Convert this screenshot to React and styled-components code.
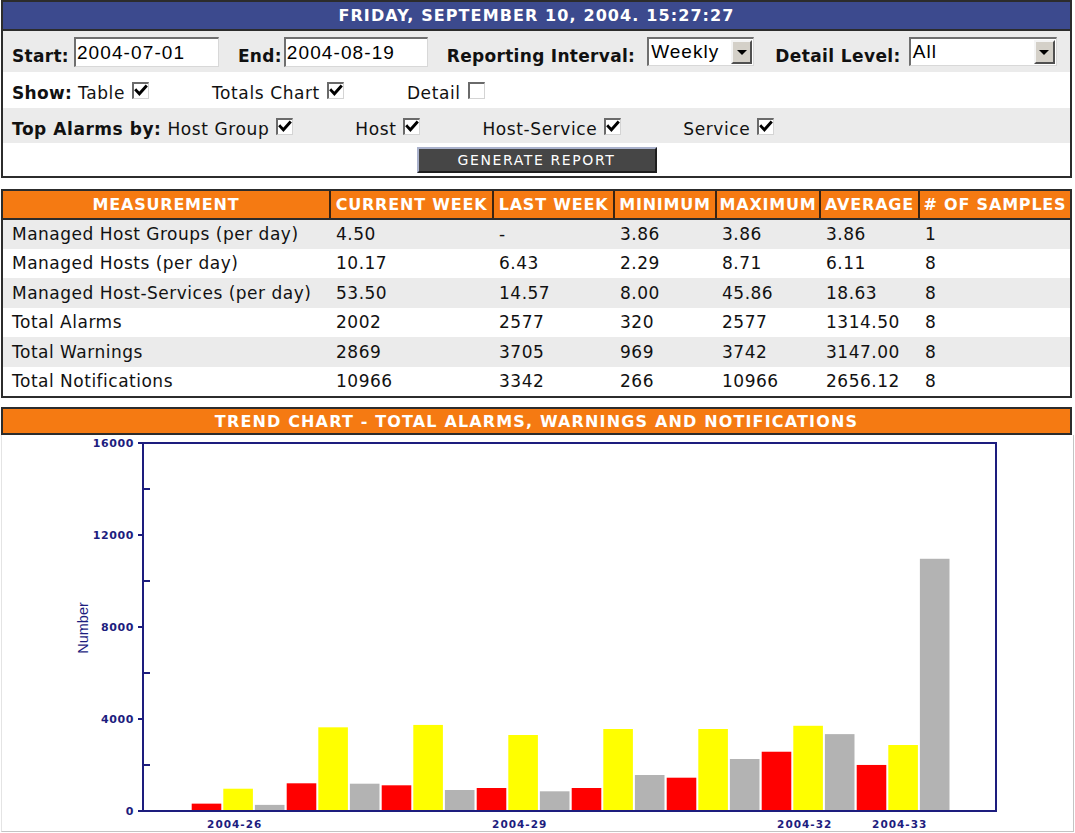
import React from 'react';
import styled, { createGlobalStyle } from 'styled-components';

const GlobalStyle = createGlobalStyle`
  html, body { margin: 0; padding: 0; background: #ffffff; }
  body { font-family: "DejaVu Sans", Verdana, sans-serif; color: #111; }
  * { box-sizing: border-box; }
`;

const NAVY = '#1d1d7e';
const ORANGE = '#f57a12';
const DARK = '#2c2c2c';

const Page = styled.div`
  width: 1075px;
  height: 833px;
  overflow: hidden;
  padding-left: 1px;
  display: flex;
  flex-direction: column;
`;

const Panel = styled.section`
  width: 1071px;
  border: 2px solid ${DARK};
  background: #fff;
  margin-top: ${p => p.$mt || 0}px;
`;

const DateBar = styled.div`
  height: 29px;
  background: #3c4a8e;
  color: #fff;
  font-weight: bold;
  font-size: 16px;
  letter-spacing: 1.1px;
  display: flex;
  align-items: center;
  justify-content: center;
  border-bottom: 2px solid ${DARK};
`;

const FormRow = styled.div`
  height: ${p => p.$h}px;
  background: ${p => (p.$shade ? '#ebebeb' : '#ffffff')};
  display: flex;
  align-items: ${p => (p.$center ? 'center' : 'flex-end')};
  justify-content: ${p => (p.$center ? 'center' : 'flex-start')};
  padding-left: ${p => (p.$center ? 0 : 9)}px;
  padding-bottom: ${p => p.$pb || 0}px;
  gap: ${p => p.$gap || 0}px;
  font-size: 17px;
`;

const Field = styled.div`
  display: flex;
  align-items: flex-end;
  gap: ${p => p.$gap}px;
  margin-left: ${p => p.$ml || 0}px;
`;

const Label = styled.span`
  font-weight: bold;
  font-size: 17px;
  line-height: 20px;
  letter-spacing: ${p => (p.$ls !== undefined ? p.$ls : 0.55)}px;
  white-space: nowrap;
  padding-bottom: ${p => p.$pb || 0}px;
`;

const Text = styled.span`
  font-size: 17px;
  line-height: 20px;
  letter-spacing: 0.6px;
  white-space: nowrap;
`;

const TextInput = styled.input`
  width: ${p => p.$w}px;
  height: 30px;
  border-top: 2px solid #6f6f6f;
  border-left: 2px solid #6f6f6f;
  border-right: 1px solid #d8d8d8;
  border-bottom: 1px solid #d8d8d8;
  background: #fff;
  font-family: "Liberation Sans", Arial, sans-serif;
  font-size: 19px;
  letter-spacing: 1.1px;
  padding: 0 0 0 1px;
  color: #000;
  outline: none;
`;

const SelectBox = styled.div`
  width: ${p => p.$w}px;
  height: 29px;
  margin-bottom: 1px;
  border-top: 2px solid #6f6f6f;
  border-left: 2px solid #6f6f6f;
  border-right: 1px solid #d8d8d8;
  border-bottom: 1px solid #d8d8d8;
  background: #fff;
  display: flex;
  align-items: center;
  justify-content: space-between;
  padding: 0 1px 0 2px;
  font-family: "Liberation Sans", Arial, sans-serif;
  font-size: 19px;
  letter-spacing: 1px;
  color: #000;
`;

const ArrowButton = styled.span`
  width: 21px;
  height: 24px;
  background: #d4d0c8;
  border-top: 2px solid #f4f4f4;
  border-left: 2px solid #f4f4f4;
  border-right: 2px solid #505050;
  border-bottom: 2px solid #505050;
  display: flex;
  align-items: center;
  justify-content: center;
  &::after {
    content: '';
    border-left: 5px solid transparent;
    border-right: 5px solid transparent;
    border-top: 5px solid #000;
  }
`;

const CheckItem = styled.div`
  display: flex;
  align-items: flex-end;
  gap: 7px;
`;

const Box = styled.span`
  width: 17px;
  height: 17px;
  margin-bottom: 4px;
  display: inline-flex;
  align-items: center;
  justify-content: center;
  background: #fff;
  border-top: 2px solid #6a6a6a;
  border-left: 2px solid #6a6a6a;
  border-right: 1px solid #d4d4d4;
  border-bottom: 1px solid #d4d4d4;
`;

const Check = ({ on }) => (
  <Box>
    {on && (
      <svg width="14" height="14" viewBox="0 0 14 14">
        <path d="M2.2 6.4 L5.4 9.8 L11.8 2.6" fill="none" stroke="#000" strokeWidth="2.9" strokeLinecap="square" />
      </svg>
    )}
  </Box>
);

const GenerateButton = styled.button`
  width: 240px;
  height: 26px;
  background: #464646;
  color: #fff;
  font-family: "DejaVu Sans", Verdana, sans-serif;
  font-size: 14px;
  letter-spacing: 1.6px;
  border-top: 2px solid #aab2cc;
  border-left: 2px solid #aab2cc;
  border-right: 2px solid #1e1e1e;
  border-bottom: 2px solid #1e1e1e;
  padding: 0;
  cursor: pointer;
`;

const DataTable = styled.table`
  width: 100%;
  border-collapse: collapse;
  table-layout: fixed;
`;

const Th = styled.th`
  height: 28px;
  padding: 0;
  background: ${ORANGE};
  color: #fff;
  font-weight: bold;
  font-size: 16px;
  letter-spacing: 0.8px;
  text-align: center;
  white-space: nowrap;
  border-right: ${p => (p.$last ? 'none' : `2px solid #3a2412`)};
  border-bottom: 2px solid ${DARK};
`;

const Tr = styled.tr`
  background: ${p => (p.$shade ? '#ebebeb' : '#ffffff')};
`;

const Td = styled.td`
  height: 29.5px;
  padding: 0 0 0 ${p => (p.$first ? 9 : 6)}px;
  font-size: 17px;
  letter-spacing: 0.5px;
  white-space: nowrap;
  color: #111;
`;

const TitleBar = styled.div`
  width: 1071px;
  height: 28px;
  margin-top: 9px;
  background: ${ORANGE};
  border: 2px solid ${DARK};
  color: #fff;
  font-weight: bold;
  font-size: 16px;
  letter-spacing: 1.15px;
  display: flex;
  align-items: center;
  justify-content: center;
`;

const ChartPanel = styled.div`
  width: 1073px;
  height: 397px;
  border-right: 1px solid #c4c4c4;
  border-bottom: 1px solid #c4c4c4;
  border-left: 1px solid #e4e4e4;
  background: #fff;
`;

const columns = [
  { name: 'MEASUREMENT', w: 327 },
  { name: 'CURRENT WEEK', w: 163 },
  { name: 'LAST WEEK', w: 121 },
  { name: 'MINIMUM', w: 102 },
  { name: 'MAXIMUM', w: 104 },
  { name: 'AVERAGE', w: 99 },
  { name: '# OF SAMPLES', w: 151 },
];

const rows = [
  ['Managed Host Groups (per day)', '4.50', '-', '3.86', '3.86', '3.86', '1'],
  ['Managed Hosts (per day)', '10.17', '6.43', '2.29', '8.71', '6.11', '8'],
  ['Managed Host-Services (per day)', '53.50', '14.57', '8.00', '45.86', '18.63', '8'],
  ['Total Alarms', '2002', '2577', '320', '2577', '1314.50', '8'],
  ['Total Warnings', '2869', '3705', '969', '3742', '3147.00', '8'],
  ['Total Notifications', '10966', '3342', '266', '10966', '2656.12', '8'],
];

const series = [
  [320, 969, 266],
  [1204, 3638, 1187],
  [1117, 3742, 913],
  [1000, 3304, 856],
  [1000, 3565, 1565],
  [1448, 3565, 2261],
  [2577, 3705, 3342],
  [2002, 2869, 10966],
];

const labels = { 0: '2004-26', 3: '2004-29', 6: '2004-32', 7: '2004-33' };
const barColors = ['#ff0000', '#ffff00', '#b3b3b3'];

const PX = { left: 143, right: 996, top: 444, bottom: 812 };
const yScale = (PX.bottom - PX.top) / 16000;

const Chart = () => (
  <svg width="1071" height="396" viewBox="2 436 1071 396">
    {series.map((g, i) => {
      const start = 191.7 + 95 * i;
      return g.map((v, j) => {
        const h = v * yScale;
        return (
          <rect key={`${i}-${j}`} x={start + j * 31.6} y={PX.bottom - h} width={29.6} height={h} fill={barColors[j]} />
        );
      });
    })}
    <rect x={PX.left} y={PX.top} width={PX.right - PX.left} height={PX.bottom - PX.top} fill="none" stroke={NAVY} strokeWidth="2" />
    {[0, 4000, 8000, 12000, 16000].map(v => {
      const y = PX.bottom - v * yScale;
      return (
        <g key={v}>
          <line x1={PX.left - 5} x2={PX.left} y1={y} y2={y} stroke={NAVY} strokeWidth="2" />
          <text x={134} y={y + 4} textAnchor="end" fill={NAVY} fontFamily="DejaVu Sans, Verdana, sans-serif" fontWeight="bold" fontSize="11" letterSpacing="0.6">{v}</text>
        </g>
      );
    })}
    {[2000, 6000, 10000, 14000].map(v => {
      const y = PX.bottom - v * yScale;
      return <line key={v} x1={PX.left} x2={PX.left + 7} y1={y} y2={y} stroke={NAVY} strokeWidth="2" />;
    })}
    {Object.entries(labels).map(([i, t]) => (
      <text key={t} x={191.7 + 95 * Number(i) + 43} y={829} textAnchor="middle" fill={NAVY} fontFamily="DejaVu Sans, Verdana, sans-serif" fontWeight="bold" fontSize="10.5" letterSpacing="1">{t}</text>
    ))}
    <text x={0} y={0} transform="translate(88 629) rotate(-90)" textAnchor="middle" fill={NAVY} fontFamily="Liberation Sans, Arial, sans-serif" fontSize="14.5">Number</text>
  </svg>
);

export default function App() {
  return (
    <Page>
      <GlobalStyle />
      <Panel>
        <DateBar>FRIDAY, SEPTEMBER 10, 2004. 15:27:27</DateBar>
        <FormRow $h={41} $shade $gap={19} $pb={5}>
          <Field $gap={5}>
            <Label $pb={1} $ls={0.3}>Start:</Label>
            <TextInput $w={145} defaultValue="2004-07-01" readOnly />
          </Field>
          <Field $gap={2}>
            <Label $pb={1} $ls={0.3}>End:</Label>
            <TextInput $w={144} defaultValue="2004-08-19" readOnly />
          </Field>
          <Field $gap={12}>
            <Label $pb={1} $ls={0.3}>Reporting Interval:</Label>
            <SelectBox $w={107}>
              <span>Weekly</span>
              <ArrowButton />
            </SelectBox>
          </Field>
          <Field $gap={8} $ml={2}>
            <Label $pb={1} $ls={0.4}>Detail Level:</Label>
            <SelectBox $w={148}>
              <span>All</span>
              <ArrowButton />
            </SelectBox>
          </Field>
        </FormRow>
        <FormRow $h={36} $gap={63} $pb={5}>
          <CheckItem>
            <Text><Label $ls={0.3}>Show:</Label> Table</Text>
            <Check on />
          </CheckItem>
          <CheckItem>
            <Text>Totals Chart</Text>
            <Check on />
          </CheckItem>
          <CheckItem>
            <Text>Detail</Text>
            <Check />
          </CheckItem>
        </FormRow>
        <FormRow $h={35} $shade $gap={62} $pb={4}>
          <CheckItem>
            <Text><Label>Top Alarms by:</Label> Host Group</Text>
            <Check on />
          </CheckItem>
          <CheckItem>
            <Text>Host</Text>
            <Check on />
          </CheckItem>
          <CheckItem>
            <Text>Host-Service</Text>
            <Check on />
          </CheckItem>
          <CheckItem>
            <Text>Service</Text>
            <Check on />
          </CheckItem>
        </FormRow>
        <FormRow $h={33} $center>
          <GenerateButton>GENERATE REPORT</GenerateButton>
        </FormRow>
      </Panel>

      <Panel $mt={11}>
        <DataTable>
          <colgroup>
            {columns.map(c => <col key={c.name} style={{ width: c.w }} />)}
          </colgroup>
          <thead>
            <tr>
              {columns.map((c, i) => (
                <Th key={c.name} $last={i === columns.length - 1}>{c.name}</Th>
              ))}
            </tr>
          </thead>
          <tbody>
            {rows.map((r, ri) => (
              <Tr key={r[0]} $shade={ri % 2 === 0}>
                {r.map((cell, ci) => (
                  <Td key={ci} $first={ci === 0}>{cell}</Td>
                ))}
              </Tr>
            ))}
          </tbody>
        </DataTable>
      </Panel>

      <TitleBar>TREND CHART - TOTAL ALARMS, WARNINGS AND NOTIFICATIONS</TitleBar>
      <ChartPanel>
        <Chart />
      </ChartPanel>
    </Page>
  );
}
